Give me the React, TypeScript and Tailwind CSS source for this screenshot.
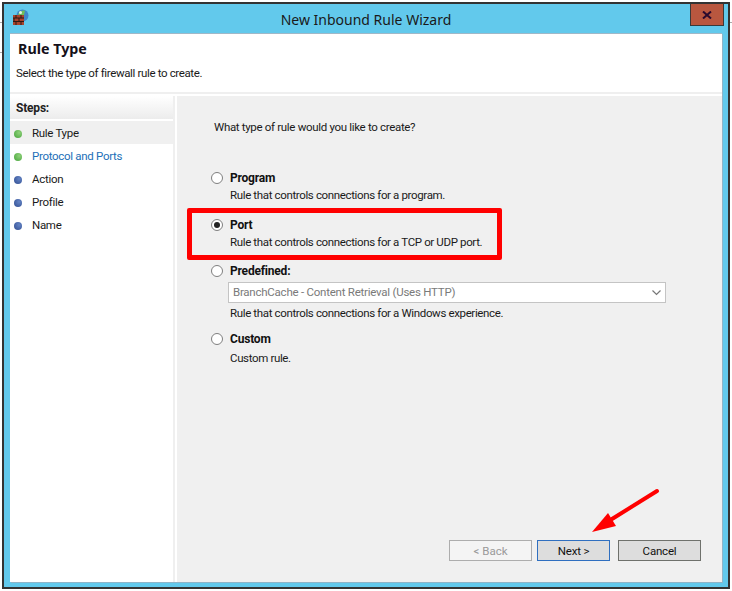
const font = { fontFamily: 'Roboto, "Noto Sans", sans-serif' };
const headFont = { fontFamily: '"Noto Sans", sans-serif' };

function FirewallIcon() {
  return (
    <svg width="17" height="17" viewBox="0 0 17 17" className="block">
      <circle cx="9.500" cy="6.500" r="6" fill="#3f87c9" />
      <path d="M5 5 Q8 1 12 1.500 L11 6 L7 7 Z" fill="#6fbf5a" />
      <circle cx="7.500" cy="3.500" r="1.500" fill="#e6f4e6" />
      <rect x="0" y="6" width="11" height="10" fill="#a8432c" />
      <path d="M0 9h11M0 12.500h11M3 6v3M8 6v3M1 9v3.500M6 9v3.500M3 12.500V16M8 12.500V16" stroke="#2e1a14" strokeWidth="1" fill="none" />
    </svg>
  );
}

function StepDot({ color, dark }: { color: string; dark: string }) {
  return (
    <span
      className="block w-2 h-2 rounded-full"
      style={{ background: `radial-gradient(circle at 65% 35%, ${color}, ${dark})` }}
    />
  );
}

function Step({ label, green, active, link }: { label: string; green?: boolean; active?: boolean; link?: boolean }) {
  return (
    <div className={`h-[23px] pt-[2px] flex items-center pl-[4px] ${active ? "bg-[#f0f0f0]" : ""}`}>
      {green ? <StepDot color="#8fd17a" dark="#43a33a" /> : <StepDot color="#6484c4" dark="#2f4c90" />}
      <span className={`ml-[10px] text-[11.500px] tracking-[-0.3px] ${link ? "text-[#1c6fb8]" : "text-[#1a1a1a]"}`}>{label}</span>
    </div>
  );
}

function Radio({ checked }: { checked?: boolean }) {
  return (
    <span className="w-[12px] h-[12px] ml-[1px] -mt-[1px] rounded-full border border-[#7f7f7f] bg-white flex items-center justify-center shrink-0">
      {checked && <span className="w-[6px] h-[6px] rounded-full bg-[#222]" />}
    </span>
  );
}

function Option({ title, desc, checked, children, className, descClass = "mt-[1px]" }: { title: string; desc: string; checked?: boolean; children?: React.ReactNode; className?: string; descClass?: string }) {
  return (
    <div className={className}>
      <div className="flex items-center h-[16px]">
        <Radio checked={checked} />
        <span className="ml-[7px] text-[12px] font-bold text-[#111] tracking-[-0.2px]">{title}</span>
      </div>
      {children}
      <div className={`ml-[20px] text-[11.500px] leading-[16px] text-[#1a1a1a] tracking-[-0.36px] ${descClass}`}>{desc}</div>
    </div>
  );
}

export default function App() {
  return (
    <div className="w-[732px] h-[591px] bg-white overflow-hidden relative pt-[2px] pl-[2px]" style={font}>
      <div className="w-[728px] h-[587px] border-2 border-[#333] bg-[#62c9ec] flex flex-col">
        {/* title bar */}
        <div className="h-[29px] shrink-0 flex items-start relative">
          <div className="ml-[9px] mt-[5px]">
            <FirewallIcon />
          </div>
          <div className="absolute left-0 right-0 top-[5px] text-center text-[14px] text-[#1a1a1a]" style={headFont}>New Inbound Rule Wizard</div>
          <div className="absolute right-[4px] top-0 w-[34px] h-[22px] bg-[#b9573f] border border-[#3a3a3a] border-t-0 flex items-center justify-center">
            <svg width="10" height="8" viewBox="0 0 10 8">
              <path d="M1 0.500 L9 7.500 M9 0.500 L1 7.500" stroke="#2a0a2e" strokeWidth="2" fill="none" />
            </svg>
          </div>
        </div>

        {/* client area */}
        <div className="ml-[6px] mr-[6px] h-[549px] bg-white border-t border-[#a0b8c8] shadow-[1px_1px_0_#8fb4c8] flex flex-col">
          <div className="h-[60px] shrink-0 pl-[6px] border-b-2 border-[#efefef]">
            <div className="mt-[5px] ml-[2px] text-[14.300px] font-bold text-[#14101a] leading-[20px]" style={headFont}>Rule Type</div>
            <div className="mt-[6px] text-[11.500px] leading-[16px] text-[#1a1a1a] tracking-[-0.36px]">Select the type of firewall rule to create.</div>
          </div>
          <div className="flex flex-1 pt-[2px]">
            <div className="w-[165px] shrink-0 border-r-2 border-[#efefef] relative">
              <div className="h-[23px] pl-[6px] flex items-center bg-gradient-to-b from-white to-[#ececec] text-[12px] font-bold text-[#222] tracking-[-0.2px]">Steps:</div>
              <div className="pt-[2px]">
                <Step label="Rule Type" green active />
                <Step label="Protocol and Ports" green link />
                <Step label="Action" />
                <Step label="Profile" />
                <Step label="Name" />
              </div>
            </div>
            <div className="flex-1 ml-[2px] bg-[#f0f0f0] flex flex-col">
              <div className="ml-[37px] mt-[23px] text-[11.500px] leading-[16px] text-[#1a1a1a] tracking-[-0.32px]">What type of rule would you like to create?</div>
              <div className="ml-[33px] mt-[35px] flex flex-col">
                <Option title="Program" desc="Rule that controls connections for a program." />
                <Option className="mt-[14px]" title="Port" desc="Rule that controls connections for a TCP or UDP port." checked />
                <Option className="mt-[13px]" title="Predefined:" desc="Rule that controls connections for a Windows experience." descClass="mt-[2px]">
                  <div className="ml-[18px] mt-[3px] w-[438px] h-[21px] bg-white border border-[#c4c4c4] flex items-center justify-between pl-[4px] pr-[4px] text-[11.500px] text-[#7a7a7a] tracking-[-0.24px]">
                    <span>BranchCache - Content Retrieval (Uses HTTP)</span>
                    <svg width="9" height="6" viewBox="0 0 9 6"><path d="M0.500 0.500 L4.500 4.500 L8.500 0.500" stroke="#777" strokeWidth="1.200" fill="none" /></svg>
                  </div>
                </Option>
                <Option className="mt-[10px]" title="Custom" desc="Custom rule." descClass="mt-[3px]" />
              </div>
              <div className="mt-auto mb-[21px] mr-[21px] flex justify-end">
                <div className="w-[83px] h-[21px] pt-[2px] border border-[#adadad] bg-[#f4f4f4] flex items-center justify-center text-[11.500px] text-[#9a9a9a]">&lt; Back</div>
                <div className="ml-[5px] w-[73px] h-[21px] pt-[2px] border border-[#2f6fc0] bg-[#dddddd] flex items-center justify-center text-[11.500px] text-[#111] tracking-[-0.2px]">Next &gt;</div>
                <div className="ml-[8px] w-[83px] h-[21px] pt-[2px] border border-[#6f716c] bg-[#dddddd] flex items-center justify-center text-[11.500px] text-[#111] tracking-[-0.2px]">Cancel</div>
              </div>
            </div>
          </div>
        </div>
      </div>

      {/* stray edges of the desktop behind the window */}
      <div className="absolute left-0 top-[22px] w-[2px] h-[1px] bg-[#aaaaaa]" />
      <div className="absolute left-0 top-[52px] w-[2px] h-[1px] bg-[#aaaaaa]" />
      <div className="absolute right-0 top-[22px] w-[2px] h-[1px] bg-[#aaaaaa]" />

      {/* annotations */}
      <div className="absolute left-[187px] top-[208px] w-[315px] h-[52px] border-[5px] border-[#ff0000] rounded-[2px]" />
      <svg className="absolute left-[590px] top-[488px]" width="70" height="45" viewBox="0 0 70 45">
        <path d="M67 3 L22 31" stroke="#f00" strokeWidth="4" strokeLinecap="round" fill="none" />
        <path d="M2 44 L18 25 L26 38 Z" fill="#f00" />
      </svg>
    </div>
  );
}
